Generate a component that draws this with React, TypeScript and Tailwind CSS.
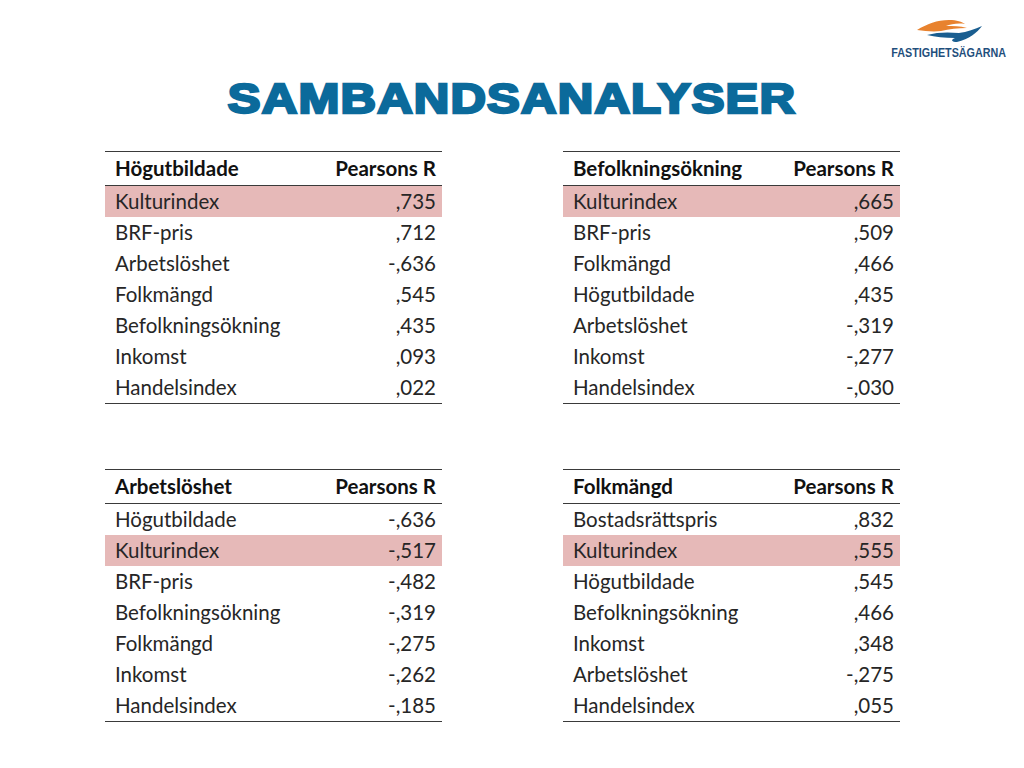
import * as React from "react"

type Row = { label: string; value: string; hl?: boolean }

interface CorrTableProps {
  title: string
  rows: Row[]
}

const tables: CorrTableProps[] = [
  {
    title: "Högutbildade",
    rows: [
      { label: "Kulturindex", value: ",735", hl: true },
      { label: "BRF-pris", value: ",712" },
      { label: "Arbetslöshet", value: "-,636" },
      { label: "Folkmängd", value: ",545" },
      { label: "Befolkningsökning", value: ",435" },
      { label: "Inkomst", value: ",093" },
      { label: "Handelsindex", value: ",022" },
    ],
  },
  {
    title: "Befolkningsökning",
    rows: [
      { label: "Kulturindex", value: ",665", hl: true },
      { label: "BRF-pris", value: ",509" },
      { label: "Folkmängd", value: ",466" },
      { label: "Högutbildade", value: ",435" },
      { label: "Arbetslöshet", value: "-,319" },
      { label: "Inkomst", value: "-,277" },
      { label: "Handelsindex", value: "-,030" },
    ],
  },
  {
    title: "Arbetslöshet",
    rows: [
      { label: "Högutbildade", value: "-,636" },
      { label: "Kulturindex", value: "-,517", hl: true },
      { label: "BRF-pris", value: "-,482" },
      { label: "Befolkningsökning", value: "-,319" },
      { label: "Folkmängd", value: "-,275" },
      { label: "Inkomst", value: "-,262" },
      { label: "Handelsindex", value: "-,185" },
    ],
  },
  {
    title: "Folkmängd",
    rows: [
      { label: "Bostadsrättspris", value: ",832" },
      { label: "Kulturindex", value: ",555", hl: true },
      { label: "Högutbildade", value: ",545" },
      { label: "Befolkningsökning", value: ",466" },
      { label: "Inkomst", value: ",348" },
      { label: "Arbetslöshet", value: "-,275" },
      { label: "Handelsindex", value: ",055" },
    ],
  },
]

function CorrTable({ title, rows }: CorrTableProps) {
  return (
    <div className="w-[337px] border-t-[1.5px] border-b-[1.5px] border-[#3a3a3a] text-[20.5px] text-[#262626]">
      {/* Header */}
      <div className="grid grid-cols-[193px_1fr] h-[34px] items-center border-b border-[#3a3a3a] font-bold text-[#111]">
        <div className="pl-[10px]">{title}</div>
        <div className="pr-[6px] text-right">Pearsons R</div>
      </div>
      {rows.map((r) => (
        <div
          key={r.label}
          className={`grid grid-cols-[193px_1fr] h-[31px] items-center ${r.hl ? "bg-[#e6b9b8]" : ""}`}
        >
          <div className="pl-[10px]">{r.label}</div>
          <div className="pr-[6px] text-right">{r.value}</div>
        </div>
      ))}
    </div>
  )
}

function Logo() {
  return (
    <div className="flex flex-col items-center w-[120px]">
      <svg width="68" height="24" viewBox="0 0 68 24">
        {/* orange wave */}
        <path
          d="M2 11 C12 5 22 1 34 1 C42 1 47 3 50 5 C43 4 36 5 31 7 C38 7 45 7 52 9 C43 9 34 10 26 12 C18 13 10 12 2 11 Z"
          fill="#e8822e"
        />
        {/* blue wave */}
        <path
          d="M12 16 C22 13 34 13 44 14 C52 13 60 10 67 7 C62 14 54 20 42 23 C37 23 35 21 40 19 C30 19 20 18 12 16 Z"
          fill="#1a5e90"
        />
      </svg>
      <div className="mt-[4px] text-[12.5px] leading-none font-bold text-[#1f4f7c] [font-family:'Liberation_Sans',Arial,sans-serif] scale-x-[0.86]">
        FASTIGHETSÄGARNA
      </div>
    </div>
  )
}

export default function App() {
  return (
    <div className="w-[1024px] h-[768px] bg-white overflow-hidden [font-family:Lato,'Open_Sans',sans-serif]">
      <div className="flex justify-end pt-[19px] pr-[15px]">
        <Logo />
      </div>
      <h1 className="mt-[18px] text-center text-[42px] leading-none font-bold text-[#0b6a9b] tracking-[1px] scale-x-[1.17] [-webkit-text-stroke:2.5px_#0b6a9b] [font-family:'Liberation_Sans',Arial,sans-serif]">
        SAMBANDSANALYSER
      </h1>
      <div className="mt-[31px] pl-[105px] grid grid-cols-[337px_337px] gap-x-[121px] gap-y-[65px]">
        {tables.map((t) => (
          <CorrTable key={t.title} title={t.title} rows={t.rows} />
        ))}
      </div>
    </div>
  )
}
